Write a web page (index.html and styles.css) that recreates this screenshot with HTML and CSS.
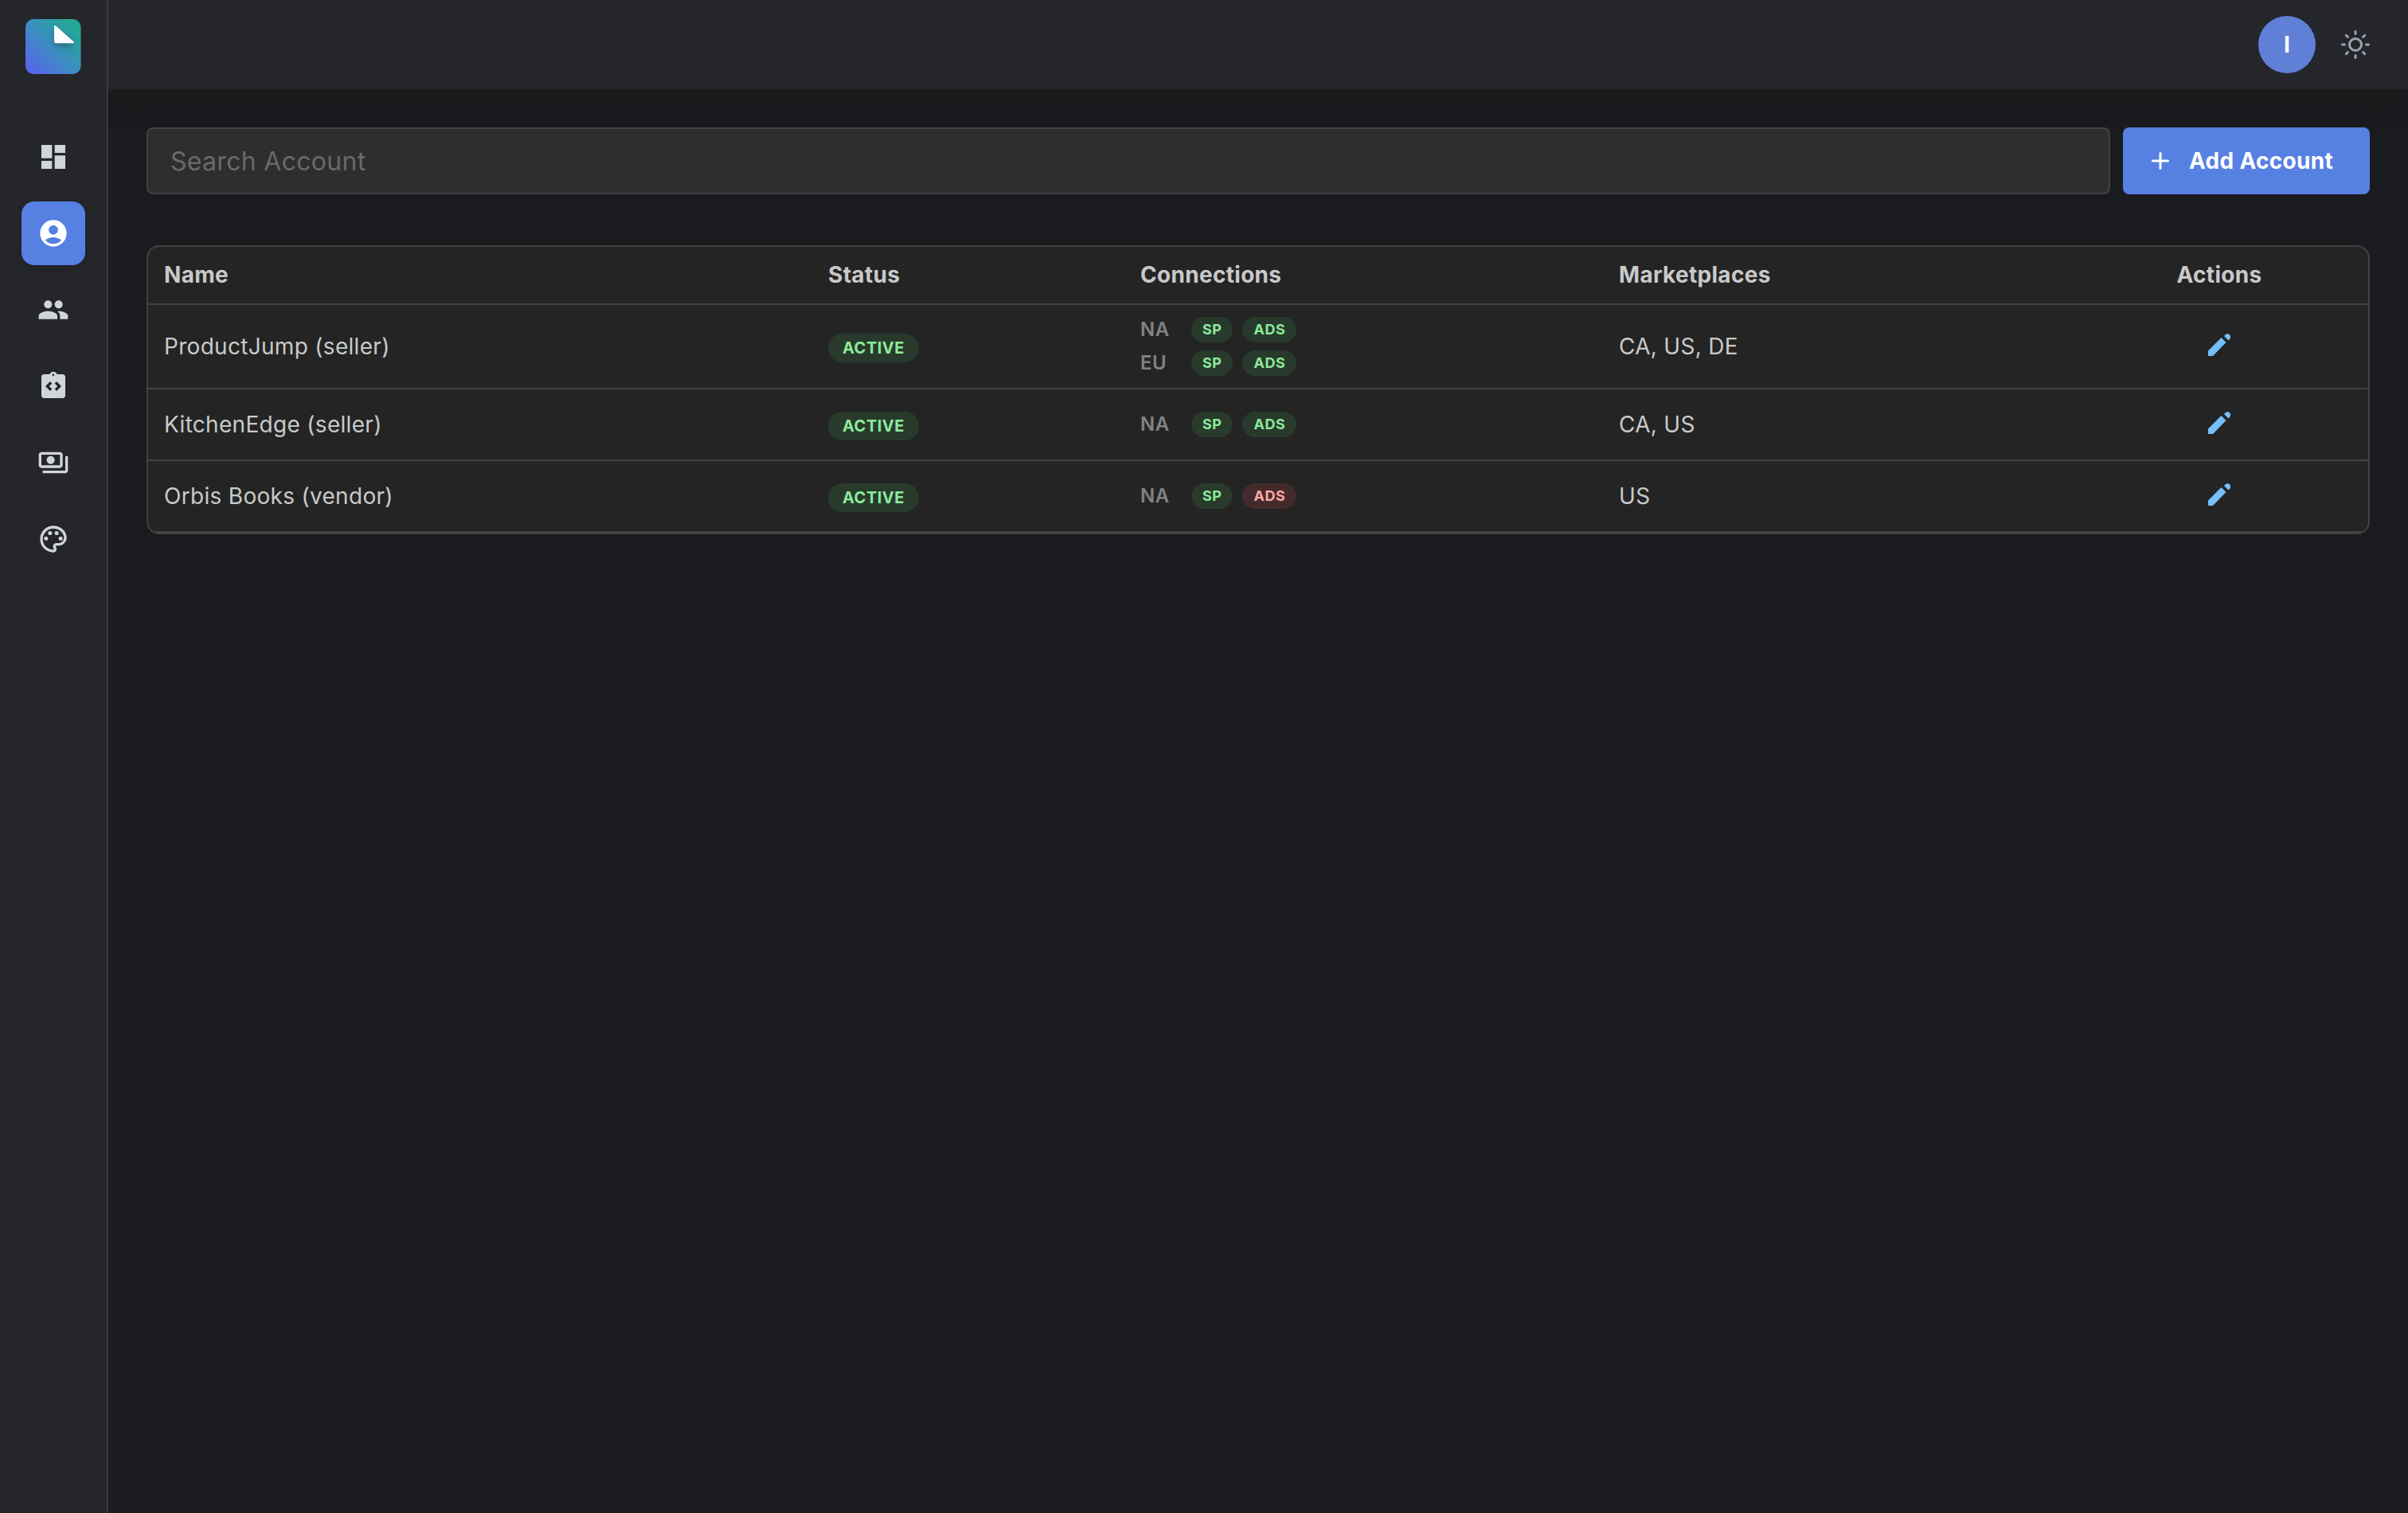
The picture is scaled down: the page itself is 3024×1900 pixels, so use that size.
FILE: index.html
```html
<!DOCTYPE html>
<html lang="en">
<head>
<meta charset="utf-8">
<title>Accounts</title>
<link rel="stylesheet" href="styles.css">
</head>
<body>
<div class="app">
  <aside class="sidebar">
    <svg class="logo" viewBox="0 0 70 70">
      <defs>
        <linearGradient id="logo-fill" x1="0" y1="1" x2="1" y2="0">
          <stop offset="0" stop-color="#5b5fef"/>
          <stop offset="0.5" stop-color="#3b8fc0"/>
          <stop offset="0.85" stop-color="#25a797"/>
          <stop offset="1" stop-color="#25a797"/>
        </linearGradient>
      </defs>
      <rect width="69.5" height="69" rx="10" fill="url(#logo-fill)"/>
      <path class="logo-fold" d="M36 9.5c0-1.6 1.2-2 2.2-1l22.2 19.7c1 1 .6 2-.7 2H38.200c-1.400 0-2.200-.8-2.200-2.200z" fill="#fff"/>
    </svg>
    <nav class="nav">
      <a class="nav-item"><svg viewBox="0 0 24 24"><path d="M3 13h8V3H3v10zm0 8h8v-6H3v6zm10 0h8V11h-8v10zm0-18v6h8V3h-8z"/></svg></a>
      <a class="nav-item active"><svg viewBox="0 0 24 24"><path d="M12 2C6.480 2 2 6.480 2 12s4.480 10 10 10 10-4.480 10-10S17.520 2 12 2zm0 4c1.930 0 3.500 1.570 3.500 3.500S13.930 13 12 13s-3.500-1.570-3.500-3.500S10.070 6 12 6zm0 14c-2.030 0-4.430-.82-6.140-2.880C7.550 15.800 9.680 15 12 15s4.450.8 6.140 2.120C16.430 19.180 14.030 20 12 20z"/></svg></a>
      <a class="nav-item"><svg viewBox="0 0 24 24"><path d="M16 11c1.660 0 2.990-1.340 2.990-3S17.660 5 16 5c-1.660 0-3 1.340-3 3s1.340 3 3 3zm-8 0c1.660 0 2.990-1.340 2.990-3S9.660 5 8 5C6.340 5 5 6.340 5 8s1.340 3 3 3zm0 2c-2.330 0-7 1.170-7 3.500V19h14v-2.500c0-2.330-4.670-3.500-7-3.500zm8 0c-.29 0-.62.02-.97.05 1.160.84 1.970 1.970 1.970 3.450V19h6v-2.500c0-2.330-4.670-3.500-7-3.500z"/></svg></a>
      <a class="nav-item"><svg viewBox="0 0 24 24"><path fill-rule="evenodd" d="M19 3h-4.180C14.400 1.840 13.300 1 12 1s-2.400.84-2.820 2H5c-1.100 0-2 .9-2 2v14c0 1.100.9 2 2 2h14c1.100 0 2-.9 2-2V5c0-1.100-.9-2-2-2zM11 14.170l-1.410 1.420L6 12l3.590-3.590L11 9.830 8.830 12 11 14.170zm1-9.920c-.41 0-.75-.34-.75-.75s.34-.75.750-.75.750.34.750.750-.34.750-.750.750zm2.410 11.340L13 14.170 15.170 12 13 9.830l1.410-1.420L18 12l-3.590 3.590z"/></svg></a>
      <a class="nav-item"><svg viewBox="0 0 24 24"><path fill-rule="evenodd" d="M19 14V6c0-1.100-.9-2-2-2H3c-1.100 0-2 .9-2 2v8c0 1.100.9 2 2 2h14c1.100 0 2-.9 2-2zm-2 0H3V6h14v8zm-7-7c-1.660 0-3 1.340-3 3s1.340 3 3 3 3-1.340 3-3-1.340-3-3-3zm13 0v11c0 1.100-.9 2-2 2H4v-2h17V7h2z"/></svg></a>
      <a class="nav-item"><svg viewBox="0 0 24 24"><path d="M12 22C6.490 22 2 17.510 2 12S6.490 2 12 2s10 4.040 10 9c0 3.310-2.690 6-6 6h-1.770c-.28 0-.5.220-.5.500 0 .12.050.23.130.33.410.47.640 1.060.640 1.670A2.500 2.500 0 0112 22zm0-18c-4.410 0-8 3.590-8 8s3.590 8 8 8c.28 0 .5-.22.500-.5a.54.54 0 00-.14-.35c-.41-.46-.63-1.050-.63-1.650a2.500 2.500 0 012.500-2.500H16c2.210 0 4-1.790 4-4 0-3.860-3.590-7-8-7z"/><circle cx="6.500" cy="11.500" r="1.500"/><circle cx="9.500" cy="7.500" r="1.500"/><circle cx="14.500" cy="7.500" r="1.500"/><circle cx="17.500" cy="11.500" r="1.500"/></svg></a>
    </nav>
  </aside>
  <div class="page">
    <header class="topbar">
      <div class="avatar">I</div>
      <svg class="sun" viewBox="0 0 36 36"><circle cx="18" cy="18" r="7.500"/><path d="M18 1.500v3M18 31.500v3M1.500 18h3M31.500 18h3M6.300 6.300l2.200 2.200M27.500 27.500l2.200 2.200M6.300 29.700l2.200-2.200M27.500 8.500l2.200-2.200"/></svg>
    </header>
    <main class="content">
      <div class="toolbar">
        <input class="search" type="text" placeholder="Search Account">
        <button class="add"><svg class="plus" viewBox="0 0 22 22"><path d="M11 1.500v19M1.500 11h19"/></svg>Add Account</button>
      </div>
      <div class="table">
        <div class="row head"><div>Name</div><div>Status</div><div>Connections</div><div>Marketplaces</div><div class="center">Actions</div></div>
        <div class="row tall">
          <div>ProductJump (seller)</div>
          <div><span class="badge status">ACTIVE</span></div>
          <div class="connections">
            <div class="connection"><span class="region">NA</span><span class="badge">SP</span><span class="badge">ADS</span></div>
            <div class="connection"><span class="region">EU</span><span class="badge">SP</span><span class="badge">ADS</span></div>
          </div>
          <div>CA, US, DE</div>
          <div class="center"><svg class="pencil" viewBox="0 0 28 28"><path d="M0 21.500L16.500 5 22.500 11 6 28H0zM20 3L21.500 1.500Q23 0 25 0.300Q28 1 28 4Q28 6 26.500 7.500L25.500 8.500z"/></svg></div>
        </div>
        <div class="row">
          <div>KitchenEdge (seller)</div>
          <div><span class="badge status">ACTIVE</span></div>
          <div class="connections">
            <div class="connection"><span class="region">NA</span><span class="badge">SP</span><span class="badge">ADS</span></div>
          </div>
          <div>CA, US</div>
          <div class="center"><svg class="pencil" viewBox="0 0 28 28"><path d="M0 21.500L16.500 5 22.500 11 6 28H0zM20 3L21.500 1.500Q23 0 25 0.300Q28 1 28 4Q28 6 26.500 7.500L25.500 8.500z"/></svg></div>
        </div>
        <div class="row">
          <div>Orbis Books (vendor)</div>
          <div><span class="badge status">ACTIVE</span></div>
          <div class="connections">
            <div class="connection"><span class="region">NA</span><span class="badge">SP</span><span class="badge error">ADS</span></div>
          </div>
          <div>US</div>
          <div class="center"><svg class="pencil" viewBox="0 0 28 28"><path d="M0 21.500L16.500 5 22.500 11 6 28H0zM20 3L21.500 1.500Q23 0 25 0.300Q28 1 28 4Q28 6 26.500 7.500L25.500 8.500z"/></svg></div>
        </div>
      </div>
    </main>
  </div>
</div>
</body>
</html>
```

FILE: styles.css
```css
* { box-sizing: border-box; }

body {
  margin: 0;
  background: #1a1b1e;
  color: #c9c9c9;
  font-family: Inter, "Liberation Sans", sans-serif;
  font-size: 28px;
  letter-spacing: 0.3px;
}

.app { display: flex; height: 1900px; overflow: hidden; }

.sidebar {
  width: 136px;
  flex: none;
  background: #25262b;
  border-right: 2px solid #373a40;
  display: flex;
  flex-direction: column;
  align-items: center;
  padding-top: 24px;
  z-index: 1;
}

.logo { width: 70px; height: 70px; }
.logo-fold { filter: drop-shadow(0 4px 4px rgba(0, 0, 0, 0.3)); }

.nav { display: flex; flex-direction: column; gap: 16px; margin-top: 63px; }

.nav-item {
  width: 80px;
  height: 80px;
  border-radius: 16px;
  display: flex;
  align-items: center;
  justify-content: center;
}
.nav-item svg { width: 40px; height: 40px; fill: #d1d5db; }
.nav-item.active { background: #5780e3; box-shadow: 0 4px 10px rgba(0, 0, 0, 0.12); }
.nav-item.active svg { fill: #fff; }

.page { flex: 1; min-width: 0; }

.topbar {
  height: 112px;
  background: #25262b;
  box-shadow: 0 20px 30px -10px rgba(24, 26, 24, 0.9);
  display: flex;
  align-items: center;
  justify-content: flex-end;
  gap: 32px;
  padding-right: 48px;
}

.avatar {
  width: 72px;
  height: 72px;
  border-radius: 50%;
  background: #6080d8;
  color: #fff;
  font-weight: 700;
  display: flex;
  align-items: center;
  justify-content: center;
}

.sun { width: 36px; height: 36px; fill: none; stroke: #9ca3af; stroke-width: 3; stroke-linecap: round; }

.content { padding: 48px; display: flex; flex-direction: column; gap: 64px; }
.toolbar { display: flex; gap: 16px; height: 84px; }

.search {
  flex: 1;
  background: #2e2e2e;
  border: 2px solid #424242;
  border-radius: 8px;
  padding: 0 28px;
  color: #c9c9c9;
  font: inherit;
  font-size: 32px;
  letter-spacing: 0.3px;
}
.search::placeholder { color: #696969; opacity: 1; }

.add {
  width: 310px;
  border: 0;
  border-radius: 8px;
  background: #5780e3;
  color: #fff;
  font: inherit;
  font-weight: 700;
  letter-spacing: inherit;
  display: flex;
  align-items: center;
  gap: 25px;
  padding: 0 0 0 36px;
  white-space: nowrap;
}
.plus { width: 22px; height: 22px; fill: none; stroke: #fff; stroke-width: 3; stroke-linecap: round; }

.table {
  background: #242424;
  border: 2px solid #424242;
  border-radius: 16px;
  overflow: hidden;
}

.row {
  display: grid;
  grid-template-columns: 834px 392px 601px 587px 374px;
  align-items: center;
  height: 90px;
  border-bottom: 2px solid #424242;
}
.row > div { padding: 0 20px; }
.row.head { height: 73px; padding-bottom: 2px; font-weight: 700; }
.row.tall { height: 106px; }
.row .center { display: flex; justify-content: center; }

.badge {
  display: flex;
  align-items: center;
  justify-content: center;
  width: max-content;
  height: 32px;
  padding: 0 14px 1px;
  border-radius: 16px;
  background: #283a2c;
  color: #8ce99a;
  font-size: 18px;
  font-weight: 700;
  letter-spacing: 0.5px;
}
.badge.status { height: 36px; margin-top: 4px; padding: 0 18px; border-radius: 18px; font-size: 20px; }
.badge.error { background: #442b2b; color: #ffa8a8; }

.connections { display: flex; flex-direction: column; gap: 10px; }
.connection { display: flex; align-items: center; gap: 12px; }
.region { width: 52px; color: #828282; font-size: 24px; font-weight: 600; line-height: 32px; letter-spacing: 0.5px; }
.pencil { width: 28px; height: 28px; margin-bottom: 4px; fill: #74c0fc; }
```
